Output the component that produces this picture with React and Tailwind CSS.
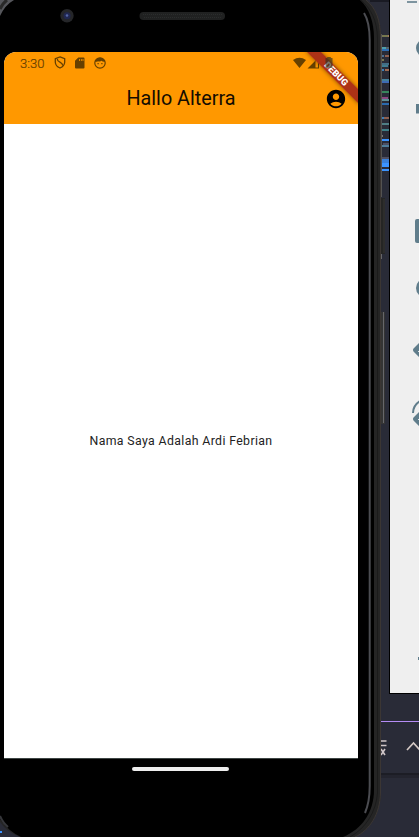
import React from "react";

const codeLines = [
  [382, 35, 6, "#77784f"], [388, 35, 1, "#a9795a"], [382, 47, 4, "#4e9fae"], [386, 47, 3, "#55636c"],
  [382, 49, 7, "#2b6bb0"], [382, 55, 2, "#4e6f91"], [385, 55, 4, "#8f604f"], [382, 59, 2, "#77784f"],
  [382, 63, 7, "#426d85"], [382, 65, 6, "#3f7c90"], [382, 69, 2, "#3d7fb8"], [385, 69, 4, "#a06a51"],
  [382, 79, 7, "#43809a"], [382, 81, 7, "#3f6bb5"], [382, 91, 7, "#38865b"], [382, 97, 6, "#8d4580"],
  [382, 99, 7, "#5f8f98"], [382, 103, 7, "#2b6bb0"], [382, 117, 2, "#3d7fb8"], [384, 117, 5, "#8f604f"],
  [382, 123, 7, "#4f7f85"], [382, 129, 7, "#3d7f86"], [382, 135, 1, "#777777"],
];

function Backdrop() {
  return (
    <svg className="absolute inset-0" width="419" height="837" viewBox="0 0 419 837" fill="none">
      <rect width="419" height="837" fill="#292b37" />
      <rect x="370" width="19" height="2" fill="#191a23" />
      {codeLines.map(([x, y, w, c], i) => (
        <rect key={i} x={x} y={y} width={w} height="2" fill={c} />
      ))}
      <path fill="#3b93ff" d="M382 139h7v2h-7zM382 163h7v4h-7zM382 169h7v2h-7z" />
      <path fill="#397fd8" d="M382 159h7v4h-7z" />
      <path fill="#4f7d9a" d="M382 145h7v2h-7z" />
      <path fill="#4d4f63" d="M383 143h6v2h-6zM382 157h7v2h-7z" />
      <rect x="389" width="30" height="694" fill="#000" />
      <rect x="390" width="29" height="693" fill="#efefef" />
      <g fill="#607d8b">
        <rect x="407" y="1" width="10" height="2" opacity=".8" />
        <circle cx="425" cy="48" r="9" />
        <rect x="416" y="104" width="5" height="9.500" />
        <rect x="415" y="219" width="20" height="24" rx="2" />
        <circle cx="425.500" cy="288" r="9.500" />
        <path d="M413.500 348.500 422 340v20l-8.500-8.500q-1-1.500 0-3ZM413.500 417.500 422 409v20l-8.500-8.500q-1-1.500 0-3Z" />
        <rect x="418" y="657" width="3" height="3" />
      </g>
      <path d="M418 352l1-1M418 420l1-1" stroke="#dfe6e9" />
      <path d="M413 413c0-5 3-9.500 7-12" stroke="#607d8b" strokeWidth="2" />
      <path d="M381 721.500h38" stroke="#b58cf5" />
      <rect x="379" y="773" width="40" height="2" fill="#1c1d25" />
      <rect x="379" y="775" width="40" height="3" fill="#23242e" />
      <path d="M380 741h6.500M380 745.500h6.500M381 749l4 6M385 749l-4 6" stroke="#d0c6c8" strokeWidth="1.600" />
      <path d="m407 750 6.500-7 6.500 7" stroke="#d3c8c4" strokeWidth="1.700" />
      <rect x="0" y="831" width="2" height="2" fill="#3b93ff" />
    </svg>
  );
}

function PhoneFrame() {
  return (
    <svg className="absolute inset-0" width="419" height="837" viewBox="0 0 419 837" fill="none">
      <rect x="380" y="198" width="5" height="56" fill="#252524" />
      <path d="M384 199v54" stroke="#373735" />
      <path d="M381.500 254v5" stroke="#66666a" />
      <rect x="381" y="312" width="4" height="112" fill="#343434" />
      <path d="M383.500 312v111" stroke="#66666a" />
      <path d="M0 0H366C376 8 381 20 381 38V793C380 814 370 830 355 837H20Q7 832 0 822Z" fill="#252525" />
      <path d="M366 0C376 8 380.500 20 380.500 38V793C380 814 370 830 355 837" stroke="#3b3633" />
      <path d="M381.500 34V197" stroke="#545352" />
      <path d="M361 0C371 9 377 20 377.500 38V793C376 812 366 828 350 837" stroke="#1b1b1b" />
      <path d="M0 0H360C369 8 374 22 374 38V790C374 812 362 829 343 837H21Q8 831 0 819Z" fill="#000" />
      <path d="M364 13Q369.700 22 369.700 40V786Q369.700 802 365 813" stroke="#4b4c51" strokeWidth="2" />
      <path d="M0 0H14Q5 5 0 16Z" fill="#55565b" />
      <path d="M0 9Q3 3 7 0" stroke="#292929" strokeWidth="3" />
      <path d="M0 816Q3 823 8 827" stroke="#35363a" strokeWidth="2" />
      <circle cx="67" cy="15.700" r="6.700" fill="#252629" />
      <circle cx="67" cy="15.700" r="3.500" fill="#202750" />
      <circle cx="67" cy="15.500" r="1.300" fill="#5365a5" />
      <rect x="139.500" y="12" width="85.500" height="8" rx="4" fill="#202121" />
      <path d="M143 14.500h79M144 17.500h78" stroke="#2b2d2d" strokeDasharray="1 1" />
    </svg>
  );
}

function StatusBar() {
  return (
    <div className="flex h-[22px] items-center pl-4 text-[#664000]">
      <span className="w-[34px] text-[13px] font-light leading-none [-webkit-text-stroke:0.2px]">3:30</span>
      <svg className="-mt-px" width="12" height="13" viewBox="0 0 12 13" fill="none" stroke="currentColor" strokeWidth="1.300">
        <path d="M6 .9 10.700 2.600v3.600Q10.400 10.300 6 12Q1.600 10.300 1.300 6.200V2.600Z" />
        <path d="M3.200 2.800Q3.400 5.200 5.900 6.200Q8.500 7.500 8.800 9.700" />
      </svg>
      <svg className="-mt-px ml-[9px]" width="10" height="12" viewBox="0 0 10 12">
        <path fill="currentColor" fillRule="evenodd" d="M3.300.5H8.500q1 0 1 1v9q0 1-1 1h-7.500q-1 0-1-1V3.800ZM4.200 2v2h.8V2ZM5.900 2v2h.8V2ZM7.600 2v2h.8V2Z" />
      </svg>
      <svg className="-mt-px ml-[9px]" width="12" height="12" viewBox="0 0 12 12" fill="none" stroke="currentColor" strokeWidth="1.200">
        <circle cx="6" cy="6" r="5.200" />
        <path fill="currentColor" stroke="none" d="M1 4.800Q2 1 6 .8Q10 1 11 4.800Q8.500 5 7.500 3.800Q6 5.200 4 4.200Q3 5 1 4.800ZM3.500 6h1.200v1.200H3.500ZM7.300 6h1.200v1.200H7.300Z" />
      </svg>
      <svg className="-mt-px ml-auto mr-[25px]" width="40" height="12" viewBox="0 0 40 12" fill="currentColor">
        <path d="M0 3Q6.500-1.500 13 3L6.500 11Z" />
        <path fillRule="evenodd" d="M26 0v11.500H14.500ZM25 4h-2.500V10.500H25Z" />
      </svg>
    </div>
  );
}

function DebugRibbon() {
  return (
    <svg className="absolute right-0 top-0" width="62" height="62" viewBox="0 0 62 62">
      <defs>
        <filter id="ribbonShadow" x="-20%" y="-20%" width="140%" height="140%">
          <feDropShadow dx="0" dy="0" stdDeviation="2" floodOpacity=".5" />
        </filter>
      </defs>
      <path d="M9-2H23L64 39V53Z" fill="#ad3218" filter="url(#ribbonShadow)" />
      <text transform="translate(40.500 21.500) rotate(45)" textAnchor="middle" y="3.500" fill="#fff" fontSize="9.200" fontWeight="900" fontFamily="Roboto, sans-serif">DEBUG</text>
      <path d="M36.500 6H34.800V5H31.200V6H29.500V16H36.500Z" fill="#33301f" opacity=".65" />
    </svg>
  );
}

function Screen() {
  return (
    <div className="relative flex h-[707px] w-[354px] flex-col overflow-hidden rounded-t-[12px] bg-white">
      <header className="h-[72px] shrink-0 bg-[#ff9800]">
        <StatusBar />
        <div className="grid h-12 grid-cols-[40px_1fr_40px] items-center">
          <h1 className="col-start-2 pt-[2px] text-center text-[19.800px] leading-none text-[#140c00]">Hallo Alterra</h1>
          <svg className="ml-[7px] mt-px" width="22" height="22" viewBox="0 0 24 24" fill="#000">
            <path d="M12 2C6.480 2 2 6.480 2 12s4.480 10 10 10 10-4.480 10-10S17.520 2 12 2zm0 4c1.930 0 3.500 1.570 3.500 3.500S13.930 13 12 13s-3.500-1.570-3.500-3.500S10.070 6 12 6zm0 14c-2.030 0-4.430-.820-6.140-2.880C7.550 15.800 9.680 15 12 15s4.450.800 6.140 2.120C16.430 19.180 14.030 20 12 20z" />
          </svg>
        </div>
      </header>
      <main className="flex flex-1 items-center justify-center pt-px text-[12.300px] tracking-[0.370px] text-[#222]">
        <p>Nama Saya Adalah Ardi Febrian</p>
      </main>
      <div className="h-px bg-[#3e4644]" />
      <DebugRibbon />
    </div>
  );
}

export default function App() {
  return (
    <div className="relative h-[837px] w-[419px] overflow-hidden font-['Roboto',sans-serif]">
      <Backdrop />
      <PhoneFrame />
      <div className="relative flex w-[358px] flex-col pl-1 pt-[52px]">
        <Screen />
        <div className="ml-[128px] mt-2 h-1 w-[97px] rounded-full bg-[#eee]" />
      </div>
    </div>
  );
}
